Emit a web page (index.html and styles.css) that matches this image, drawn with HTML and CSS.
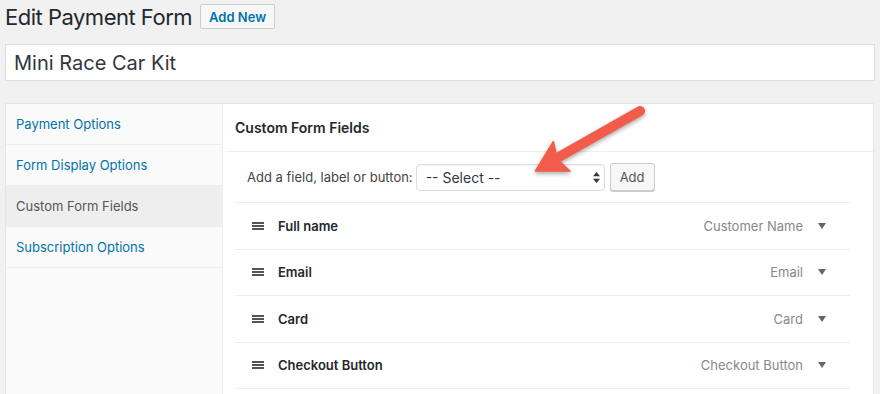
FILE: index.html
```html
<!DOCTYPE html>
<html lang="en">
<head>
  <meta charset="UTF-8">
  <title>Edit Payment Form</title>
  <link rel="stylesheet" href="styles.css">
</head>
<body>
  <div class="wrap">
    <div class="heading">
      <h1>Edit Payment Form</h1>
      <a class="page-action" href="#">Add New</a>
    </div>
    <input class="title-input" type="text" value="Mini Race Car Kit">
    <div class="settings">
      <ul class="tabs">
        <li><a href="#">Payment Options</a></li>
        <li><a href="#">Form Display Options</a></li>
        <li class="active"><a href="#">Custom Form Fields</a></li>
        <li><a href="#">Subscription Options</a></li>
      </ul>
      <div class="tab-panel">
        <h2>Custom Form Fields</h2>
        <div class="panel-body">
          <div class="add-field">
            <label>Add a field, label or button:</label>
            <div class="select">
              <span>-- Select --</span>
              <svg class="updown" width="7" height="11" viewBox="0 0 7 11"><path d="M3.5 0L7 4.2H0z M3.5 11L7 6.8H0z" fill="#32373c"/></svg>
            </div>
            <button class="btn">Add</button>
          </div>
          <ul class="fields">
            <li>
              <span class="handle"></span>
              <strong>Full name</strong>
              <span class="type">Customer Name</span>
              <span class="caret"></span>
            </li>
            <li>
              <span class="handle"></span>
              <strong>Email</strong>
              <span class="type">Email</span>
              <span class="caret"></span>
            </li>
            <li>
              <span class="handle"></span>
              <strong>Card</strong>
              <span class="type">Card</span>
              <span class="caret"></span>
            </li>
            <li>
              <span class="handle"></span>
              <strong>Checkout Button</strong>
              <span class="type">Checkout Button</span>
              <span class="caret"></span>
            </li>
          </ul>
        </div>
      </div>
    </div>
  </div>
  <!-- annotation arrow drawn over the screenshot -->
  <svg class="callout" width="880" height="394" viewBox="0 0 880 394">
    <line x1="640" y1="111" x2="557" y2="158" stroke="#f35b4b" stroke-width="10" stroke-linecap="round"/>
    <path d="M535.5 171 L553.4 141.5 L557 159 L570 171.1 Z" fill="#f35b4b" stroke="#f35b4b" stroke-width="1.5" stroke-linejoin="round"/>
  </svg>
</body>
</html>
```

FILE: styles.css
```css
* {
  box-sizing: border-box;
}
html, body, ul, li, h1, h2 {
  margin: 0;
  padding: 0;
}
ul {
  list-style: none;
}
html {
  overflow: hidden;
}
body {
  position: relative;
  height: 394px;
  background-color: #f1f1f1;
  color: #444;
  font-family: Inter, "Liberation Sans", sans-serif;
  font-size: 13px;
}
a {
  text-decoration: none;
}
.wrap {
  padding: 4px 5px 0 5px;
}
.heading {
  display: flex;
  align-items: center;
  height: 25px;
}
.heading h1 {
  font-size: 22px;
  font-weight: 400;
  letter-spacing: -0.5px;
  color: #23282d;
  margin-right: 8px;
}
.page-action {
  display: flex;
  align-items: center;
  height: 25px;
  padding: 0 8px;
  border: 1px solid #ccc;
  border-radius: 2px;
  background-color: #f7f7f7;
  color: #0073aa;
  font-weight: 600;
  font-size: 13px;
}
.title-input {
  display: block;
  width: 100%;
  height: 37px;
  margin-top: 15px;
  padding: 0 8px;
  border: 1px solid #ddd;
  background-color: #fff;
  color: #32373c;
  font-family: inherit;
  font-size: 20px;
  outline: none;
}
.settings {
  display: flex;
  margin-top: 22px;
  width: 869px;
  min-height: 320px;
  border: 1px solid #e5e5e5;
  background-color: #fff;
}
.tabs {
  width: 217px;
  flex-shrink: 0;
  background-color: #fafafa;
  border-right: 1px solid #eee;
}
.tabs li {
  height: 41px;
  border-bottom: 1px solid #eee;
}
.tabs li a {
  display: flex;
  align-items: center;
  height: 100%;
  padding-left: 10px;
  color: #0073aa;
}
.tabs li.active {
  background-color: #eee;
}
.tabs li.active a {
  color: #555;
}
.tab-panel {
  flex: 1;
  padding-left: 2px;
}
.tab-panel h2 {
  display: flex;
  align-items: center;
  height: 48px;
  padding-left: 10px;
  border-bottom: 1px solid #eee;
  font-size: 14px;
  font-weight: 600;
  color: #23282d;
}
.panel-body {
  padding: 0 23px 0 10px;
}
.add-field {
  display: flex;
  align-items: center;
  height: 51px;
  padding-left: 12px;
  border-bottom: 1px solid #eee;
  color: #444;
}
.add-field label {
  margin-right: 3px;
}
.select {
  display: flex;
  align-items: center;
  justify-content: space-between;
  width: 189px;
  height: 27px;
  padding: 0 4px 0 9px;
  border: 1px solid #ddd;
  border-radius: 4px;
  box-shadow: inset 0 1px 2px rgba(0, 0, 0, 0.05);
  color: #32373c;
  font-size: 14px;
}
.btn {
  height: 28px;
  margin-left: 5px;
  padding: 0 9px;
  border: 1px solid #ccc;
  border-radius: 3px;
  background-color: #f7f7f7;
  box-shadow: 0 1px 0 #ccc;
  color: #555;
  font-family: inherit;
  font-size: 13px;
}
.fields li {
  display: flex;
  align-items: center;
  height: 46.5px;
  padding: 0 24px 0 17px;
  border-bottom: 1px solid #eee;
}
.handle {
  width: 12px;
  height: 8px;
  margin-right: 14px;
  border-top: 2px solid #555;
  border-bottom: 2px solid #555;
  position: relative;
}
.handle::after {
  content: "";
  position: absolute;
  left: 0;
  right: 0;
  top: 1px;
  height: 2px;
  background-color: #555;
}
.fields strong {
  font-weight: 600;
  color: #23282d;
}
.type {
  margin-left: auto;
  color: #888;
}
.caret {
  width: 0;
  height: 0;
  margin-left: 15px;
  border-left: 4px solid transparent;
  border-right: 4px solid transparent;
  border-top: 6px solid #666;
}
.callout {
  position: absolute;
  left: 0;
  top: 0;
  pointer-events: none;
  filter: drop-shadow(0 2px 2px rgba(0, 0, 0, 0.35));
}
```
